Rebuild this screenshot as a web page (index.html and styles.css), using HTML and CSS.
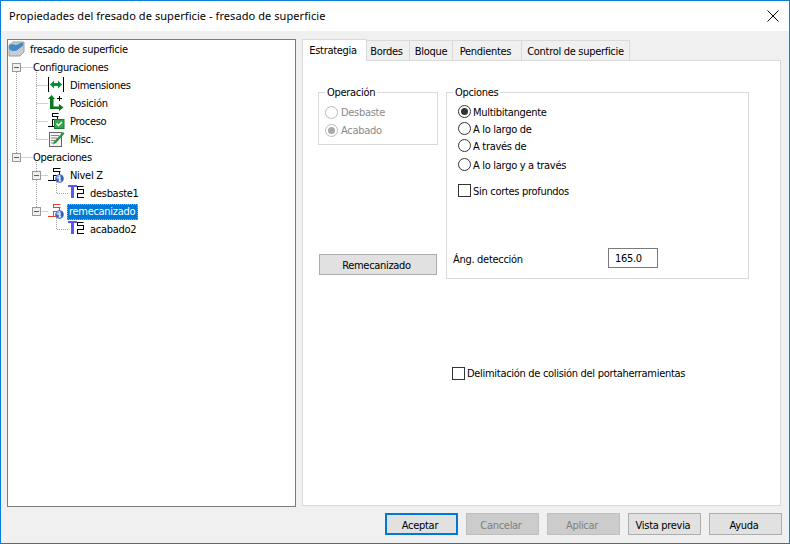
FILE: index.html
```html
<!DOCTYPE html>
<html lang="es">
<head>
<meta charset="utf-8">
<title>Propiedades del fresado de superficie</title>
<link rel="stylesheet" href="styles.css">
</head>
<body>
<svg class="defs" width="0" height="0" aria-hidden="true">
  <symbol id="i-step" viewBox="0 0 17 16">
    <path d="M0 13.500h11M5.500 1.500h7M5.500 1v4M5.500 4.500h7M11.500 4v4M6 8.500h6M5.500 8v5" fill="none" stroke="#000"/>
  </symbol>
  <symbol id="i-info" viewBox="0 0 9 9">
    <circle cx="4.500" cy="4.500" r="4.300" fill="#3560b8"/>
    <circle cx="3.500" cy="3.300" r="2.200" fill="#8fb0ea"/>
    <path d="M4 1.200h1.400v1.300H4zM3.400 3.300h2.100v3.200h.8v1H3.400v-1h.8V4.300h-.8z" fill="#fff"/>
  </symbol>
  <symbol id="i-tool" viewBox="0 1 17 16">
    <path d="M0 0h9v3H6v11H3V3H0z" fill="#5a55f5"/>
    <path d="M9.500 2.500h6M9.500 2v4M9.500 5.500h6M15.500 5v4.500M10 9.500h6M9.500 9v4M9 13.500h7" fill="none" stroke="#000"/>
  </symbol>
</svg>
<main class="dialog">
  <header class="titlebar">
    <h1 class="title">Propiedades del fresado de superficie - fresado de superficie</h1>
    <svg class="close" width="12" height="12" viewBox="0 0 12 12"><path d="M.5.5l11 11M11.500.5l-11 11" stroke="#000" fill="none"/></svg>
  </header>
  <div class="body">
    <nav class="tree">
      <svg class="guides" width="80" height="200" viewBox="0 0 80 200" aria-hidden="true">
        <path class="dots" d="M8.500 32V113M8.500 27.500H25M8.500 117.500H25M28.500 32V99M28.500 45.500H40M28.500 63.500H40M28.500 81.500H40M28.500 99.500H40M28.500 122V171M28.500 135.500H40M28.500 171.500H40M48.500 140V153.500H60M48.500 176V189.500H60"/>
        <g class="boxes">
          <rect x="4.500" y="23.500" width="8" height="8"/><path d="M6 27.500h5"/>
          <rect x="4.500" y="113.500" width="8" height="8"/><path d="M6 117.500h5"/>
          <rect x="24.500" y="131.500" width="8" height="8"/><path d="M26 135.500h5"/>
          <rect x="24.500" y="167.500" width="8" height="8"/><path d="M26 171.500h5"/>
        </g>
      </svg>
      <ul class="rows">
        <li class="row lvl0">
          <svg class="ico" width="17" height="16" viewBox="0 0 17 16">
            <path d="M1 4l4-3h11v10l-4 4H1z" fill="#c9ccd0" stroke="#9aa0a6"/>
            <path d="M1 5c3-3 5-1 7-1s5-3 7-2c1 2-1 4-3 5s-3 3-6 3-6-2-5-5z" fill="#3f8bc4"/>
          </svg>
          <span class="txt">fresado de superficie</span>
        </li>
        <li class="row lvl1"><span class="txt">Configuraciones</span></li>
        <li class="row lvl2">
          <svg class="ico" width="17" height="16" viewBox="0 0 17 16"><path d="M.5 0v15M15.500 0v15" stroke="#000" fill="none"/><path d="M2 7.500l4-4v2.500h4V3.500l4 4-4 4V9H6v2.500z" fill="#0a8a3a"/></svg>
          <span class="txt">Dimensiones</span>
        </li>
        <li class="row lvl2">
          <svg class="ico" width="17" height="16" viewBox="0 0 17 16"><path d="M0 4l3.500-4L7 4H5.500v7.500H11V9l4.500 3.500L11 16v-2H2V4z" fill="#0a7a1e"/><path d="M9 3.500h5M11.500 1v5" stroke="#000" fill="none"/></svg>
          <span class="txt">Posición</span>
        </li>
        <li class="row lvl2">
          <svg class="ico" width="17" height="16" viewBox="0 0 17 16"><path d="M0 13.500h8M4.500.5h6M4.500 0v4M4.500 3.500h6M9.500 3v3M5 6.500h5M4.500 6v7" stroke="#000" fill="none"/><rect x="6.500" y="6.500" width="9.500" height="9" fill="#2fa84a" stroke="#1a7a30"/><path d="M8.500 10.500l2 2 3.500-3.500" stroke="#fff" stroke-width="1.500" fill="none"/></svg>
          <span class="txt">Proceso</span>
        </li>
        <li class="row lvl2">
          <svg class="ico" width="17" height="16" viewBox="0 0 17 16"><rect x="1.500" y="1.500" width="12" height="14" fill="#f4f4f4" stroke="#666"/><path d="M3 4.500h8M3 7h6M3 9.500h4M3 12h3" stroke="#888" fill="none"/><path d="M15 1l1.500 1.500L8 12l-3 1.500L6 10.500z" fill="#1f9a3a"/></svg>
          <span class="txt">Misc.</span>
        </li>
        <li class="row lvl1"><span class="txt">Operaciones</span></li>
        <li class="row lvl2">
          <span class="ico stack"><svg width="17" height="16"><use href="#i-step"/></svg><svg class="info" width="9" height="9"><use href="#i-info"/></svg></span>
          <span class="txt">Nivel Z</span>
        </li>
        <li class="row lvl3">
          <svg class="ico tool" width="17" height="16"><use href="#i-tool"/></svg>
          <span class="txt">desbaste1</span>
        </li>
        <li class="row lvl2">
          <span class="ico stack"><svg class="red" width="17" height="16" viewBox="0 0 17 16"><path d="M0 13.500h11M5.500 1.500h7M5.500 1v4M5.500 4.500h7M11.500 4v4M6 8.500h6M5.500 8v5" fill="none" stroke="#e8401c"/></svg><svg class="info" width="9" height="9"><use href="#i-info"/></svg></span>
          <span class="txt sel">remecanizado</span>
        </li>
        <li class="row lvl3">
          <svg class="ico tool" width="17" height="16"><use href="#i-tool"/></svg>
          <span class="txt">acabado2</span>
        </li>
      </ul>
    </nav>
    <section class="props">
      <div class="tabs">
        <span class="tab active t1">Estrategia</span>
        <span class="tab t2">Bordes</span>
        <span class="tab t3">Bloque</span>
        <span class="tab t4">Pendientes</span>
        <span class="tab t5">Control de superficie</span>
      </div>
      <div class="panel">
        <div class="cols">
          <div class="leftcol">
            <fieldset class="group opgroup">
              <legend>Operación</legend>
              <label class="opt off first"><span class="radio"></span>Desbaste</label>
              <label class="opt off"><span class="radio on"></span>Acabado</label>
            </fieldset>
            <button class="btn wide" type="button">Remecanizado</button>
          </div>
          <fieldset class="group optgroup">
            <legend>Opciones</legend>
            <label class="opt first"><span class="radio on"></span>Multibitangente</label>
            <label class="opt"><span class="radio"></span>A lo largo de</label>
            <label class="opt"><span class="radio"></span>A través de</label>
            <label class="opt tall"><span class="radio"></span>A lo largo y a través</label>
            <label class="opt deep"><span class="check"></span>Sin cortes profundos</label>
            <div class="angle"><span>Áng. detección</span><span class="input">165.0</span></div>
          </fieldset>
        </div>
        <label class="opt collide"><span class="check"></span>Delimitación de colisión del portaherramientas</label>
      </div>
    </section>
  </div>
  <footer class="footer">
    <button class="btn default" type="button">Aceptar</button>
    <button class="btn disabled" type="button">Cancelar</button>
    <button class="btn disabled" type="button">Aplicar</button>
    <button class="btn" type="button">Vista previa</button>
    <button class="btn" type="button">Ayuda</button>
  </footer>
</main>
</body>
</html>
```
FILE: styles.css
```css
* { box-sizing: border-box; }
html, body { margin: 0; padding: 0; }
body {
  width: 790px; height: 544px; overflow: hidden;
  font: 11px/16px "DejaVu Sans Condensed", "Liberation Sans", sans-serif;
  letter-spacing: -.3px;
  color: #000; background: #f0f0f0;
}
.defs { position: absolute; }
.dialog {
  width: 790px; height: 544px;
  border: 1px solid #0a7fd6;
  background: #f0f0f0;
  display: flex; flex-direction: column;
}
.titlebar {
  height: 30px; flex: none; background: #fff;
  display: flex; align-items: center; justify-content: space-between;
  padding: 0 10px 0 8px;
}
.title { margin: 0; font: 400 11px/16px "Noto Sans", sans-serif; letter-spacing: .07px; }
.close { display: block; margin-top: -1px; }
.body { flex: 1; display: flex; padding: 8px 8px 0 6px; gap: 6px; min-height: 0; }
.tree {
  position: relative; width: 289px; height: 468px; flex: none;
  background: #fff; border: 1px solid #7a7a7a;
}
.guides { position: absolute; left: 0; top: 0; pointer-events: none; }
.dots { fill: none; stroke: #a0a0a0; stroke-dasharray: 1 1; }
.boxes rect { fill: #f0f0f0; stroke: #999; }
.boxes path { stroke: #4060b0; fill: none; }
.rows { list-style: none; margin: 0; padding: 0; position: relative; }
.row { height: 18px; padding-top: 2px; display: flex; align-items: center; white-space: nowrap; }
.lvl0 { padding-left: 0; }
.lvl1 { padding-left: 25px; }
.lvl2 { padding-left: 40px; }
.lvl3 { padding-left: 60px; }
.ico { flex: none; display: block; width: 17px; height: 16px; margin: 0 5px 2px 0; }
.tool { overflow: visible; }
.stack { position: relative; }
.stack svg { display: block; }
.stack .info { position: absolute; left: 7px; top: 7px; }
.txt { line-height: 16px; }
.sel {
  margin-left: -3px; padding: 0 3px 0 2px; background: #0078d7; color: #fff;
  outline: 1px dotted #f59b2e; outline-offset: -1px;
}
.props { width: 479px; flex: none; display: flex; flex-direction: column; }
.tabs { height: 21px; display: flex; align-items: flex-end; position: relative; z-index: 1; }
.tab {
  height: 20px; line-height: 22px; text-align: center; white-space: nowrap;
  background: #f0f0f0; border: 1px solid #d9d9d9; border-bottom: 0; margin-left: -1px;
}
.tab.active { height: 22px; background: #fff; margin: 0 0 -1px 0; line-height: 22px; }
.t1 { width: 65px; padding-right: 3px; } .t2 { width: 44px; padding-right: 3px; } .t3 { width: 44px; }
.t4 { width: 70px; padding-right: 3px; } .t5 { width: 109px; }
.panel {
  height: 446px; background: #fff; border: 1px solid #d9d9d9;
  padding: 23px 0 0 15px;
}
.cols { display: flex; gap: 8px; align-items: flex-start; }
.leftcol { width: 120px; display: flex; flex-direction: column; }
.group {
  margin: 0; padding: 0 0 0 11px; border: 1px solid #d9d9d9; min-width: 0;
  position: relative;
}
.group legend { padding: 0 2px; margin-left: -5px; line-height: 18px; height: 16px; }
.opgroup { height: 61px; padding-left: 6px; }
.optgroup { width: 303px; height: 195px; }
.opgroup legend { margin-left: 0; }
.opt { display: flex; align-items: center; height: 17px; gap: 2px; }
.opt.first { margin-top: 4px; }
.opt.tall { margin-top: 2px; }
.off { color: #8a8a8a; gap: 3px; height: 18px; }
.radio {
  width: 13px; height: 13px; border-radius: 50%; border: 1px solid #333; background: #fff;
  flex: none; position: relative; margin-top: -2px;
}
.radio.on::after {
  content: ""; position: absolute; left: 2px; top: 2px; width: 7px; height: 7px;
  border-radius: 50%; background: #333;
}
.off .radio { border-color: #bbb; }
.off .radio.on::after { background: #aaa; }
.check { width: 13px; height: 13px; border: 1px solid #333; background: #fff; flex: none; margin-top: -2px; }
.deep { margin-top: 9px; }
.angle { display: flex; align-items: center; margin: 48px 0 0 -5px; height: 20px; }
.angle span:first-child { width: 155px; padding-top: 3px; }
.input {
  width: 50px; height: 20px; border: 1px solid #7a7a7a; line-height: 20px; padding-left: 6px; background: #fff;
}
.btn {
  width: 73px; height: 22px; padding: 3px 3px 0 0; margin: 0;
  font: inherit; letter-spacing: inherit; line-height: 16px; color: #000;
  background: #e1e1e1; border: 1px solid #adadad; border-radius: 0;
}
.btn.wide { width: 118px; height: 21px; margin: 109px 0 0 1px; padding-top: 2px; }
.btn.default { border: 2px solid #0078d7; }
.btn.disabled { background: #cccccc; border-color: #bfbfbf; color: #7f7f7f; }
.collide { margin: 88px 0 0 134px; height: 14px; }
.footer { height: 36px; flex: none; display: flex; justify-content: flex-end; gap: 8px; padding: 6px 7px 0 0; }
```
